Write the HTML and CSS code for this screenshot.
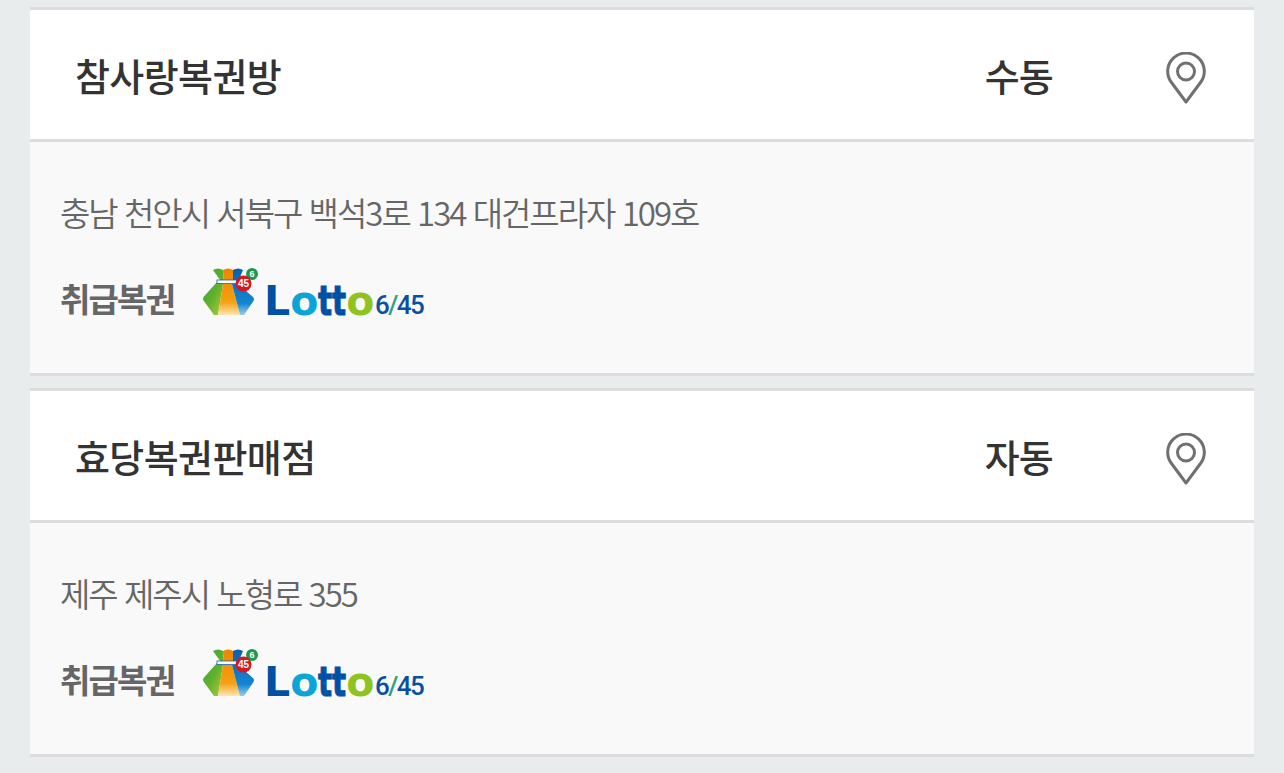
FILE: index.html
```html
<!DOCTYPE html>
<html lang="ko">
<head>
<meta charset="utf-8">
<title>판매점</title>
<link rel="stylesheet" href="styles.css">
</head>
<body>
<svg class="defs" width="0" height="0" aria-hidden="true">
  <defs>
    <linearGradient id="gGreen" x1="0" y1="0" x2="0.8" y2="1"><stop offset="0" stop-color="#2fa838"/><stop offset="0.6" stop-color="#62b02c"/><stop offset="1" stop-color="#a3c93a"/></linearGradient>
    <linearGradient id="gOrange" x1="0" y1="0" x2="0" y2="1"><stop offset="0" stop-color="#ee8500"/><stop offset="0.72" stop-color="#f5a011"/><stop offset="1" stop-color="#fde6b4"/></linearGradient>
    <linearGradient id="gBlue" x1="0" y1="0" x2="0" y2="1"><stop offset="0" stop-color="#0a5fb2"/><stop offset="0.75" stop-color="#1486cf"/><stop offset="1" stop-color="#9ccdec"/></linearGradient>
  </defs>
</svg>
<ul class="list">
  <li class="card">
    <div class="head">
      <h2 class="name">참사랑복권방</h2>
      <span class="mode">수동</span>
      <svg class="pin" viewBox="0 0 40 52" width="40" height="52" aria-hidden="true">
        <path d="M20 50 L5.5 30.5 A18.3 18.3 0 1 1 34.5 30.5 Z" fill="none" stroke="#707070" stroke-width="3" stroke-linejoin="round"/>
        <circle cx="20" cy="19.5" r="8.5" fill="none" stroke="#707070" stroke-width="3"/>
      </svg>
    </div>
    <div class="body">
      <p class="addr">충남 천안시 서북구 백석3로 134 대건프라자 109호</p>
      <div class="kinds">
        <span class="kinds-label">취급복권</span>
        <svg class="logo" viewBox="0 0 226 54" width="226" height="54" role="img" aria-label="Lotto 6/45">
          <path d="M13 4 Q18 1 23 4 L24 16 L17 16 L3.5 31 Q2.5 33 3.5 34.5 L14 49 L18 49 L23 18 Z" fill="url(#gGreen)"/>
          <path d="M23 4 Q28 1 33 4 L33 16 L24 16 Z M23 18 L32 18 L40 49 L18 49 Z" fill="url(#gOrange)"/>
          <path d="M33 4 Q38 1 43 4 L38 16 L33 16 Z M32 18 L38 18 L53 31 Q55 33 53.5 35 L44 49 L40 49 Z" fill="url(#gBlue)"/>
          <rect x="17" y="14" width="22" height="3.4" fill="#fff" stroke="#1c5fa8" stroke-width="0.8"/>
          <circle cx="52" cy="8" r="6" fill="#1a9a4a"/>
          <text x="52" y="11" class="b6">6</text>
          <circle cx="43.5" cy="17.5" r="8" fill="#d8161f"/>
          <text x="43.5" y="21" class="b45">45</text>
          <text x="64" y="49" class="lotto c-d">L</text>
          <text x="90.2" y="49" class="lotto c-c">o</text>
          <text transform="translate(118 49) scale(0.72 1)" class="lotto c-d tt">tt</text>
          <text x="146.3" y="49" class="lotto c-g">o</text>
          <text x="175" y="48" class="lotto-n">6<tspan class="c-s">/</tspan>45</text>
        </svg>
      </div>
    </div>
  </li>
  <li class="card">
    <div class="head">
      <h2 class="name">효당복권판매점</h2>
      <span class="mode">자동</span>
      <svg class="pin" viewBox="0 0 40 52" width="40" height="52" aria-hidden="true">
        <path d="M20 50 L5.5 30.5 A18.3 18.3 0 1 1 34.5 30.5 Z" fill="none" stroke="#707070" stroke-width="3" stroke-linejoin="round"/>
        <circle cx="20" cy="19.5" r="8.5" fill="none" stroke="#707070" stroke-width="3"/>
      </svg>
    </div>
    <div class="body">
      <p class="addr">제주 제주시 노형로 355</p>
      <div class="kinds">
        <span class="kinds-label">취급복권</span>
        <svg class="logo" viewBox="0 0 226 54" width="226" height="54" role="img" aria-label="Lotto 6/45">
          <path d="M13 4 Q18 1 23 4 L24 16 L17 16 L3.5 31 Q2.5 33 3.5 34.5 L14 49 L18 49 L23 18 Z" fill="url(#gGreen)"/>
          <path d="M23 4 Q28 1 33 4 L33 16 L24 16 Z M23 18 L32 18 L40 49 L18 49 Z" fill="url(#gOrange)"/>
          <path d="M33 4 Q38 1 43 4 L38 16 L33 16 Z M32 18 L38 18 L53 31 Q55 33 53.5 35 L44 49 L40 49 Z" fill="url(#gBlue)"/>
          <rect x="17" y="14" width="22" height="3.4" fill="#fff" stroke="#1c5fa8" stroke-width="0.8"/>
          <circle cx="52" cy="8" r="6" fill="#1a9a4a"/>
          <text x="52" y="11" class="b6">6</text>
          <circle cx="43.5" cy="17.5" r="8" fill="#d8161f"/>
          <text x="43.5" y="21" class="b45">45</text>
          <text x="64" y="49" class="lotto c-d">L</text>
          <text x="90.2" y="49" class="lotto c-c">o</text>
          <text transform="translate(118 49) scale(0.72 1)" class="lotto c-d tt">tt</text>
          <text x="146.3" y="49" class="lotto c-g">o</text>
          <text x="175" y="48" class="lotto-n">6<tspan class="c-s">/</tspan>45</text>
        </svg>
      </div>
    </div>
  </li>
</ul>
</body>
</html>
```
FILE: styles.css
```css
* { box-sizing: border-box; }
html, body { margin: 0; padding: 0; }
body {
  background: #e9eced;
  height: 773px;
  overflow: hidden;
  font-family: "Noto Sans CJK KR", "Noto Sans", sans-serif;
}
.defs { position: absolute; }
.list {
  list-style: none;
  margin: 0;
  padding: 7px 30px 0;
  display: flex;
  flex-direction: column;
  gap: 12px;
}
.card {
  border-top: 3px solid #dcdcdc;
  border-bottom: 3px solid #dcdcdc;
  background: #f9f9f9;
}
.head {
  height: 132px;
  background: #fff;
  border-bottom: 3px solid #dcdcdc;
  display: flex;
  align-items: center;
  padding: 0 48px 0 45px;
}
.name {
  margin: 0;
  flex: 1;
  font-size: 38px;
  font-weight: 500;
  letter-spacing: -0.6px;
  color: #333;
}
.mode {
  font-size: 38px;
  font-weight: 500;
  letter-spacing: -0.8px;
  color: #333;
  margin-right: 113px;
}
.pin { display: block; margin-top: 6px; }
.body {
  height: 231px;
  padding: 47px 30px 0;
}
.addr {
  margin: 0;
  font-size: 33px;
  line-height: 46px;
  font-weight: 350;
  letter-spacing: -2px;
  color: #666;
}
.kinds {
  display: flex;
  align-items: center;
  margin-top: 31px;
}
.kinds-label {
  font-size: 33px;
  font-weight: 700;
  letter-spacing: -1.8px;
  color: #666;
  width: 140px;
}
.logo { display: block; margin-bottom: 10px; overflow: visible; }
.b6, .b45 {
  font-family: "Liberation Sans", sans-serif;
  font-weight: 700;
  fill: #fff;
  text-anchor: middle;
}
.b6 { font-size: 9px; }
.b45 { font-size: 10px; }
.lotto {
  font-family: "DejaVu Sans", "Liberation Sans", sans-serif;
  font-weight: 700;
  font-size: 41px;
}
.tt { stroke: #0050a4; stroke-width: 1px; }
.c-d { fill: #0050a4; }
.c-c { fill: #0aa5d8; }
.c-g { fill: #8fc31f; }
.lotto-n {
  font-family: "Roboto", "Liberation Sans", sans-serif;
  font-weight: 500;
  font-size: 26px;
  letter-spacing: -1.6px;
  fill: #0a4fa3;
}
.c-s { fill: #2f9e7a; }
```
